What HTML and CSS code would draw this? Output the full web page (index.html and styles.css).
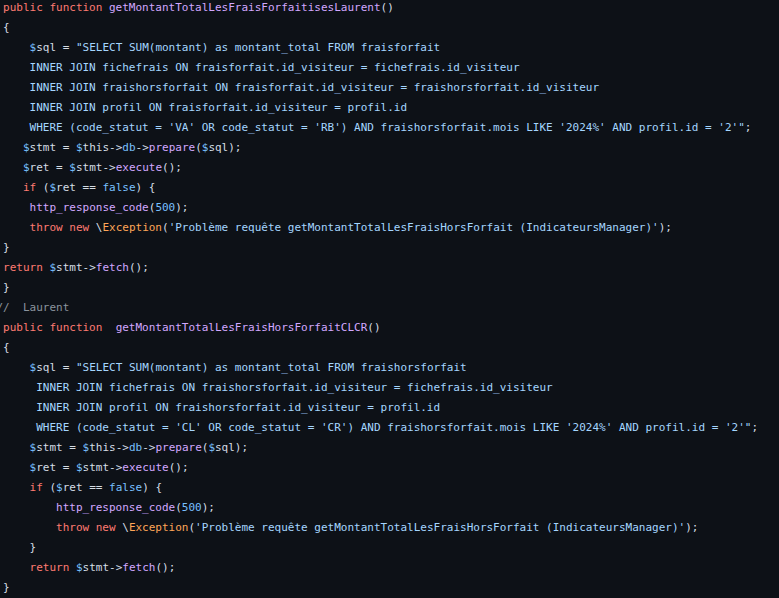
FILE: index.html
```html
<!DOCTYPE html>
<html lang="fr">
<head>
<meta charset="utf-8">
<title>Code</title>
<link rel="stylesheet" href="styles.css">
</head>
<body>
<pre class="code"><code> <span class="k">public function</span> <span class="f">getMontantTotalLesFraisForfaitisesLaurent</span>()
 {
     <span class="d">$</span>sql = <span class="s">"SELECT SUM(montant) as montant_total FROM fraisforfait
     INNER JOIN fichefrais ON fraisforfait.id_visiteur = fichefrais.id_visiteur
     INNER JOIN fraishorsforfait ON fraisforfait.id_visiteur = fraishorsforfait.id_visiteur
     INNER JOIN profil ON fraisforfait.id_visiteur = profil.id
     WHERE (code_statut = 'VA' OR code_statut = 'RB') AND fraishorsforfait.mois LIKE '2024%' AND profil.id = '2'"</span>;
    <span class="d">$</span>stmt = <span class="d">$</span>this-&gt;<span class="c">db</span>-&gt;<span class="f">prepare</span>(<span class="d">$</span>sql);
    <span class="d">$</span>ret = <span class="d">$</span>stmt-&gt;<span class="f">execute</span>();
    <span class="k">if</span> (<span class="d">$</span>ret == <span class="c">false</span>) {
     <span class="f">http_response_code</span>(<span class="c">500</span>);
     <span class="k">throw new</span> \<span class="t">Exception</span>(<span class="s">'Problème requête getMontantTotalLesFraisHorsForfait (IndicateursManager)'</span>);
 }
 <span class="k">return</span> <span class="d">$</span>stmt-&gt;<span class="f">fetch</span>();
 }
<span class="cm">//  Laurent</span>
 <span class="k">public function</span>  <span class="f">getMontantTotalLesFraisHorsForfaitCLCR</span>()
 {
     <span class="d">$</span>sql = <span class="s">"SELECT SUM(montant) as montant_total FROM fraishorsforfait
      INNER JOIN fichefrais ON fraishorsforfait.id_visiteur = fichefrais.id_visiteur
      INNER JOIN profil ON fraishorsforfait.id_visiteur = profil.id
      WHERE (code_statut = 'CL' OR code_statut = 'CR') AND fraishorsforfait.mois LIKE '2024%' AND profil.id = '2'"</span>;
     <span class="d">$</span>stmt = <span class="d">$</span>this-&gt;<span class="c">db</span>-&gt;<span class="f">prepare</span>(<span class="d">$</span>sql);
     <span class="d">$</span>ret = <span class="d">$</span>stmt-&gt;<span class="f">execute</span>();
     <span class="k">if</span> (<span class="d">$</span>ret == <span class="c">false</span>) {
         <span class="f">http_response_code</span>(<span class="c">500</span>);
         <span class="k">throw new</span> \<span class="t">Exception</span>(<span class="s">'Problème requête getMontantTotalLesFraisHorsForfait (IndicateursManager)'</span>);
     }
     <span class="k">return</span> <span class="d">$</span>stmt-&gt;<span class="f">fetch</span>();
 }</code></pre>
</body>
</html>
```
FILE: styles.css
```css
html, body {
  margin: 0;
  padding: 0;
  background: #0d1117;
  overflow: hidden;
}
.code {
  margin: -2px 0 0 -3.6px;
  padding: 0;
  font-family: "DejaVu Sans Mono", "Liberation Mono", monospace;
  font-size: 11px;
  line-height: 20px;
  color: #d5dde5;
  white-space: pre;
}
.k { color: #ff7b72; }
.f { color: #d2a8ff; }
.d { color: #79c0ff; }
.c { color: #79c0ff; }
.s { color: #a5d6ff; }
.t { color: #ffa657; }
.cm { color: #8b949e; }
```
